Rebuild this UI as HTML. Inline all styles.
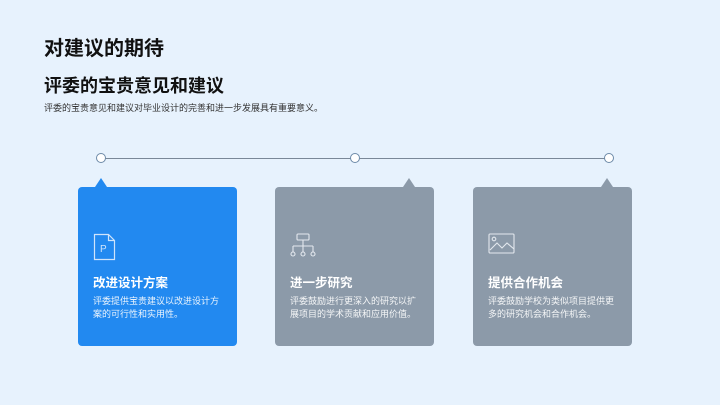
<!DOCTYPE html>
<html><head><meta charset="utf-8"><style>
*{margin:0;padding:0;box-sizing:border-box}
body{width:720px;height:405px;background:#e7f2fd;font-family:"Liberation Sans","Noto Sans CJK SC",sans-serif;position:relative;overflow:hidden;color:#111}
.t{position:absolute;white-space:nowrap}
.card{position:absolute;top:187px;width:159px;height:159px;border-radius:4px;color:#fff}
.card:before{content:"";position:absolute;top:-9px;border-left:6px solid transparent;border-right:6px solid transparent;border-bottom:9px solid}
.b{background:#2289f0}
.g{background:#8c9aa9}
div.card.b:before{left:17px;border-bottom-color:#2289f0}
div.card.g:before{left:128px;border-bottom-color:#8c9aa9}
.card h3{position:absolute;left:15px;top:85px;font-size:12.5px;font-weight:bold}
.card p{position:absolute;left:15px;top:107.5px;font-size:9px;line-height:13.5px;width:128px;opacity:.9}
.card svg{position:absolute;left:15px;top:46px}
.dot{position:absolute;top:153px;width:10px;height:10px;border-radius:50%;background:#fff;border:1.3px solid #6d8aa8}
</style></head><body>
<div class="t" style="left:44px;top:32px;font-size:20px;font-weight:bold">对建议的期待</div>
<div class="t" style="left:44px;top:72px;font-size:18px;font-weight:bold">评委的宝贵意见和建议</div>
<div class="t" style="left:44px;top:101px;font-size:9px;color:#333">评委的宝贵意见和建议对毕业设计的完善和进一步发展具有重要意义。</div>
<div style="position:absolute;left:101px;top:157.5px;width:508px;height:1px;background:#7a8898"></div>
<div class="dot" style="left:96px"></div>
<div class="dot" style="left:350px"></div>
<div class="dot" style="left:604px"></div>
<div class="card b" style="left:78px">
<svg width="24" height="28" viewBox="0 0 24 28" fill="none" stroke="#cfe4fb" stroke-width="1.2"><path d="M1.5 1.5h14l6 6v19h-20z M15.5 1.5v6h6"/><text x="7" y="19" font-size="10" fill="#cfe4fb" stroke="none" font-family="Liberation Sans">P</text></svg>
<h3>改进设计方案</h3><p>评委提供宝贵建议以改进设计方案的可行性和实用性。</p></div>
<div class="card g" style="left:275px">
<svg width="26" height="26" viewBox="0 0 26 26" fill="none" stroke="#e3e8ee" stroke-width="1.1"><rect x="7" y="1" width="12" height="6" rx="1"/><path d="M13 7v6M3 13h20M3 13v6M13 13v6M23 13v6"/><circle cx="3" cy="21" r="2"/><circle cx="13" cy="21" r="2"/><circle cx="23" cy="21" r="2"/></svg>
<h3>进一步研究</h3><p>评委鼓励进行更深入的研究以扩展项目的学术贡献和应用价值。</p></div>
<div class="card g" style="left:473px">
<svg width="28" height="22" viewBox="0 0 28 22" fill="none" stroke="#e3e8ee" stroke-width="1.1"><rect x="1" y="1" width="25" height="19" rx="1"/><circle cx="6" cy="6" r="1.8"/><path d="M2 17l7-7 5 5 5-5 7 6"/></svg>
<h3>提供合作机会</h3><p>评委鼓励学校为类似项目提供更多的研究机会和合作机会。</p></div>
</body></html>
